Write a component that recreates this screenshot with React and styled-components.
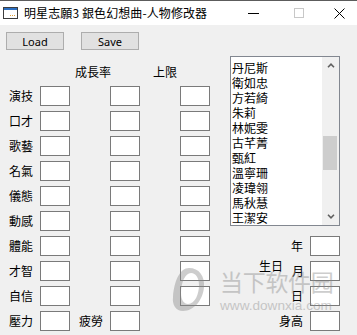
import React from "react"
import styled, { createGlobalStyle } from "styled-components"

const GlobalStyle = createGlobalStyle`
  html, body {
    margin: 0;
    padding: 0;
    background: #f0f0f0;
  }
  body {
    font-family: "Noto Sans CJK TC", "Noto Sans CJK SC", sans-serif;
    font-size: 12px;
    color: #000;
  }
`

const cjk = `"Noto Sans CJK TC", "Noto Sans CJK SC", sans-serif`

const Window = styled.div`
  position: relative;
  width: 357px;
  height: 335px;
  background: #f0f0f0;
  overflow: hidden;
`

const TitleBar = styled.div`
  height: 25px;
  box-sizing: border-box;
  border-top: 1px solid #5c5c5c;
  background: #fff;
  display: flex;
  align-items: center;
`

const AppIcon = styled.svg`
  width: 15px;
  height: 12px;
  margin-left: 3px;
  margin-right: 6px;
  flex: none;
`

const Title = styled.div`
  flex: 1;
  font-family: ${cjk};
  font-size: 12px;
  line-height: 16px;
  letter-spacing: 0.1px;
  color: #000;
  white-space: nowrap;
`

const CaptionButton = styled.div`
  width: ${(p) => p.$w}px;
  height: 24px;
  display: flex;
  align-items: center;
  justify-content: center;
  flex: none;
`

const Body = styled.div`
  display: flex;
`

const LeftPanel = styled.div`
  width: 230px;
  flex: none;
`

const ButtonBar = styled.div`
  display: flex;
  gap: 17px;
  margin: 7px 0 0 6px;
`

const Button = styled.button`
  width: 58px;
  height: 18px;
  box-sizing: border-box;
  padding: 0;
  border: 1px solid #adadad;
  background: #e1e1e1;
  font-family: "Noto Sans", "Liberation Sans", sans-serif;
  font-size: 11px;
  line-height: 15px;
  color: #000;
`

const FieldGrid = styled.div`
  display: grid;
  grid-template-columns: 40px 30px 40px 30px 40px 30px;
  grid-template-rows: 20px;
  grid-auto-rows: 20px;
  row-gap: 5px;
  margin-top: 11px;
`

const ColumnHead = styled.div`
  grid-column: ${(p) => p.$col} / span 2;
  padding-left: ${(p) => p.$pad}px;
  align-self: end;
  font-family: ${cjk};
  font-size: 12px;
  line-height: 16px;
  margin-bottom: 1px;
`

const Label = styled.div`
  grid-column: ${(p) => p.$col};
  text-align: right;
  padding-right: 7px;
  font-family: ${cjk};
  font-size: 12px;
  line-height: 20px;
  white-space: nowrap;
`

const Box = styled.input`
  grid-column: ${(p) => p.$col};
  width: 30px;
  height: 20px;
  box-sizing: border-box;
  margin: 0;
  padding: 0 2px;
  border: 1px solid #7a7a7a;
  background: #fff;
  font-size: 12px;
  outline: none;
`

const RightPanel = styled.div`
  width: 110px;
  padding-top: 31px;
  flex: none;
`

const ListBox = styled.div`
  height: 170px;
  box-sizing: border-box;
  border: 1px solid #828790;
  background: #fff;
  display: flex;
`

const Items = styled.ul`
  flex: 1;
  list-style: none;
  margin: 0;
  padding: 3px 0 0 1px;
  overflow: hidden;
`

const Item = styled.li`
  font-family: ${cjk};
  font-size: 12px;
  line-height: 15px;
  white-space: nowrap;
`

const ScrollBar = styled.div`
  width: 17px;
  background: #f0f0f0;
  display: flex;
  flex-direction: column;
`

const ScrollArrow = styled.div`
  height: 17px;
  display: flex;
  align-items: center;
  justify-content: center;
  flex: none;
`

const Track = styled.div`
  flex: 1;
`

const Thumb = styled.div`
  width: 14px;
  height: 34px;
  margin: 62px 0 0 1px;
  background: #cdcdcd;
`

const DateGrid = styled.div`
  display: grid;
  grid-template-columns: 55px 25px 30px;
  grid-auto-rows: 20px;
  row-gap: 5px;
  margin-top: 10px;
`

const DateLabel = styled.div`
  grid-column: ${(p) => p.$col};
  grid-row: ${(p) => p.$row};
  text-align: right;
  padding-right: ${(p) => p.$pad ?? 7}px;
  font-family: ${cjk};
  font-size: 12px;
  line-height: 20px;
  white-space: nowrap;
  transform: translateY(${(p) => p.$shift ?? 0}px);
`

const DateBox = styled(Box)`
  grid-column: 3;
  grid-row: ${(p) => p.$row};
`

const Watermark = styled.div`
  position: absolute;
  left: 172px;
  top: 267px;
  display: flex;
  align-items: flex-start;
  pointer-events: none;
  opacity: 0.42;
`

const WatermarkLogo = styled.svg`
  width: 34px;
  height: 45px;
  flex: none;
`

const WatermarkText = styled.div`
  margin-left: 14px;
  display: flex;
  flex-direction: column;
  color: #8a8a8a;
`

const WatermarkBrand = styled.div`
  font-family: "Noto Sans CJK SC", sans-serif;
  font-size: 23px;
  line-height: 23px;
  margin-top: 3px;
  letter-spacing: -0.3px;
`

const WatermarkUrl = styled.div`
  font-family: "Liberation Sans", Arial, sans-serif;
  font-size: 13.6px;
  line-height: 14px;
  margin-top: 6px;
`

const rows = [
  { label: "演技", cap: true },
  { label: "口才", cap: true },
  { label: "歌藝", cap: true },
  { label: "名氣", cap: true },
  { label: "儀態", cap: true },
  { label: "動感", cap: true },
  { label: "體能", cap: true },
  { label: "才智", cap: true },
  { label: "自信", cap: true },
  { label: "壓力", extra: "疲勞", cap: false },
]

const names = [
  "丹尼斯",
  "衛如忠",
  "方若綺",
  "朱莉",
  "林妮雯",
  "古芊菁",
  "甄紅",
  "溫寧珊",
  "凌瑋翎",
  "馬秋慧",
  "王潔安",
]

const Chevron = ({ up }) => (
  <svg width="8" height="5" viewBox="0 0 8 5">
    <path
      d={up ? "M1 4.2 L4 1.2 L7 4.2" : "M1 0.8 L4 3.8 L7 0.8"}
      fill="none"
      stroke="#606060"
      strokeWidth="1.6"
    />
  </svg>
)

const App = () => {
  return (
    <>
      <GlobalStyle />
      <Window>
        <TitleBar>
          <AppIcon viewBox="0 0 15 12">
            <rect x="0.5" y="0.5" width="14" height="11" fill="#fff" stroke="#3c3c3c" />
            <rect x="1" y="1" width="13" height="2" fill="#2b6fc2" />
            <rect x="9" y="8" width="1" height="1" fill="#e2a23a" />
            <rect x="11" y="8" width="1" height="1" fill="#e2a23a" />
            <rect x="7" y="8" width="1" height="1" fill="#e2a23a" />
          </AppIcon>
          <Title>明星志願3 銀色幻想曲-人物修改器</Title>
          <CaptionButton $w={46}>
            <svg width="11" height="1" viewBox="0 0 11 1">
              <rect width="11" height="1" fill="#000" />
            </svg>
          </CaptionButton>
          <CaptionButton $w={46}>
            <svg width="10" height="10" viewBox="0 0 10 10">
              <rect x="0.5" y="0.5" width="9" height="9" fill="none" stroke="#c8c8c8" />
            </svg>
          </CaptionButton>
          <CaptionButton $w={35}>
            <svg width="11" height="11" viewBox="0 0 11 11">
              <path d="M0.5 0.5 L10.5 10.5 M10.5 0.5 L0.5 10.5" stroke="#000" strokeWidth="1" />
            </svg>
          </CaptionButton>
        </TitleBar>

        <Body>
          <LeftPanel>
            <ButtonBar>
              <Button>Load</Button>
              <Button>Save</Button>
            </ButtonBar>

            <FieldGrid>
              <ColumnHead $col={3} $pad={5}>成長率</ColumnHead>
              <ColumnHead $col={5} $pad={13}>上限</ColumnHead>
              {rows.map((r) => (
                <React.Fragment key={r.label}>
                  <Label $col={1}>{r.label}</Label>
                  <Box $col={2} readOnly />
                  {r.extra && <Label $col={3}>{r.extra}</Label>}
                  <Box $col={4} readOnly />
                  {r.cap && <Box $col={6} readOnly />}
                </React.Fragment>
              ))}
            </FieldGrid>
          </LeftPanel>

          <RightPanel>
            <ListBox>
              <Items>
                {names.map((n) => (
                  <Item key={n}>{n}</Item>
                ))}
              </Items>
              <ScrollBar>
                <ScrollArrow>
                  <Chevron up />
                </ScrollArrow>
                <Track>
                  <Thumb />
                </Track>
                <ScrollArrow>
                  <Chevron />
                </ScrollArrow>
              </ScrollBar>
            </ListBox>

            <DateGrid>
              <DateLabel $col={2} $row={1}>年</DateLabel>
              <DateBox $row={1} readOnly />
              <DateLabel $col={1} $row={2} $pad={2} $shift={-5}>生日</DateLabel>
              <DateLabel $col={2} $row={2} $pad={6}>月</DateLabel>
              <DateBox $row={2} readOnly />
              <DateLabel $col={2} $row={3}>日</DateLabel>
              <DateBox $row={3} readOnly />
              <DateLabel $col="1 / span 2" $row={4}>身高</DateLabel>
              <DateBox $row={4} readOnly />
            </DateGrid>
          </RightPanel>
        </Body>

        <Watermark>
          <WatermarkLogo viewBox="0 0 34 45">
            <path
              fillRule="evenodd"
              fill="#8a8a8a"
              d="M17 1 C27 1 33 9 32 20 C31 33 22 44 11 44 C4 44 0 38 1 30 C2 14 8 1 17 1 Z M19 6 C13 6 9 16 9 26 C9 33 12 37 16 37 C23 37 27 27 27 18 C27 11 24 6 19 6 Z"
            />
          </WatermarkLogo>
          <WatermarkText>
            <WatermarkBrand>当下软件园</WatermarkBrand>
            <WatermarkUrl>www.downxia.com</WatermarkUrl>
          </WatermarkText>
        </Watermark>
      </Window>
    </>
  )
}

export default App
